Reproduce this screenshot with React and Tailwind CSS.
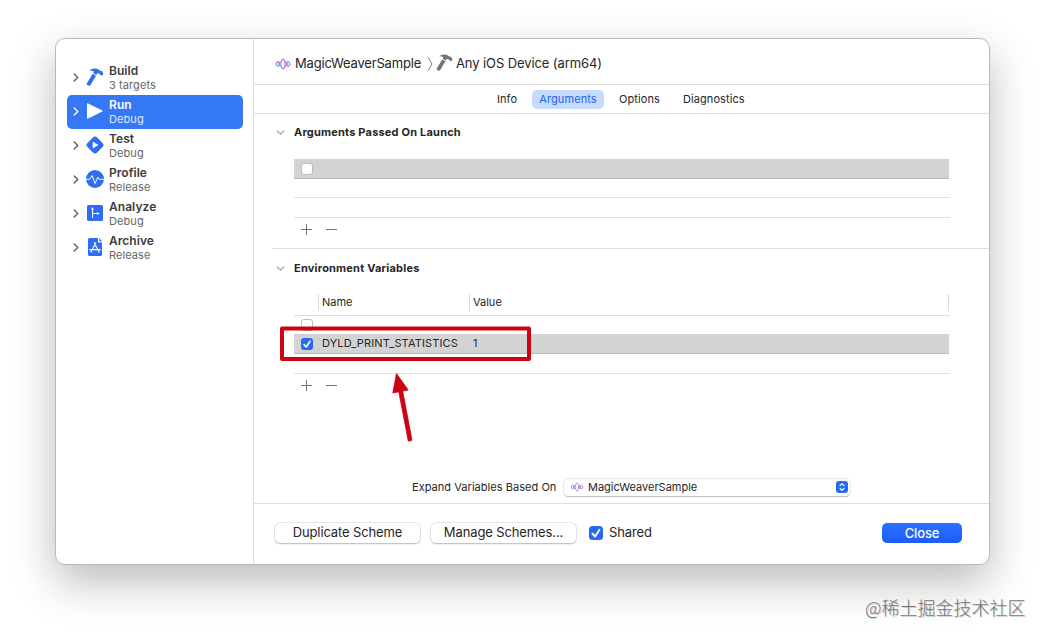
import React from "react";

const schemes = [
  { name: "Build", detail: "3 targets", icon: "build" },
  { name: "Run", detail: "Debug", icon: "run" },
  { name: "Test", detail: "Debug", icon: "test" },
  { name: "Profile", detail: "Release", icon: "profile" },
  { name: "Analyze", detail: "Debug", icon: "analyze" },
  { name: "Archive", detail: "Release", icon: "archive" },
];

function Hammer({ className }) {
  return (
    <svg viewBox="0 0 18 18" className={className} fill="currentColor">
      <path d="M3.300 2.500C5.200.6 8.300-.1 11 .8c1.500.5 2.500 1.200 3.200 2.100l1.500-.2 1.800 3.200-1.800 1.800-1.900-1.300-.5-.9-2-.2-1 1.600-3.100-1.800.7-1.500C6.700 2.500 5 2.500 3.300 2.500z" />
      <path d="M6.600 5.700 10 7.800 4.500 17c-.5.9-1.400 1-2.300.5l-.8-.5c-.8-.5-.9-1.300-.3-2.100z" />
    </svg>
  );
}

function SchemeIcon({ icon }) {
  if (icon === "build") return <Hammer className="w-[18px] h-[18px] text-[#2f6ef3]" />;
  if (icon === "run") {
    return (
      <svg viewBox="0 0 18 18" className="w-[18px] h-[18px]">
        <path d="M1.500 1.700v14.600L16.300 9z" fill="#fff" stroke="#fff" strokeWidth="1" strokeLinejoin="round" />
      </svg>
    );
  }
  if (icon === "test") {
    return (
      <svg viewBox="0 0 18 18" className="w-[18px] h-[18px]">
        <rect x="2.200" y="2.200" width="13.600" height="13.600" rx="3" transform="rotate(45 9 9)" fill="#2f6ef3" />
        <path d="M7 5.900v6.200L12 9z" fill="#fff" stroke="#fff" strokeWidth=".5" strokeLinejoin="round" />
      </svg>
    );
  }
  if (icon === "profile") {
    return (
      <svg viewBox="0 0 18 18" className="w-[18px] h-[18px]" fill="none">
        <circle cx="9" cy="9" r="9" fill="#2f6ef3" />
        <path d="M0 9.300h3.600L6.200 5.500l2.900 8 2.800-6.300 1.300 2.100H18" stroke="#fff" strokeWidth="1" strokeLinejoin="round" />
      </svg>
    );
  }
  if (icon === "analyze") {
    return (
      <svg viewBox="0 0 18 18" className="w-[18px] h-[18px]" fill="none">
        <rect x="1" y="1" width="16" height="16" rx="1.500" fill="#2f6ef3" />
        <path d="M6.500 5v9M6.500 9.500h5.500" stroke="#fff" strokeWidth="1" />
        <path d="M6.500 3.200 8.100 5.600H4.900zM13.600 9.500 11.200 7.900v3.200z" fill="#fff" />
      </svg>
    );
  }
  return (
    <svg viewBox="0 0 18 18" className="w-[18px] h-[18px]" fill="none">
      <path d="M3.500 0H12v4.500h4V16.500a1.500 1.500 0 0 1-1.500 1.500h-11A1.500 1.500 0 0 1 2 16.500v-15A1.500 1.500 0 0 1 3.500 0z" fill="#2f6ef3" />
      <path d="M13.300 0 16 3.200h-2.700z" fill="#2f6ef3" />
      <path d="M9.700 5 5 14M8.300 5l4.700 9M3.700 11.700h10.600" stroke="#fff" strokeWidth="1.200" strokeLinecap="round" />
    </svg>
  );
}

function Chevron({ className }) {
  return (
    <svg viewBox="0 0 6 10" className={className} fill="none" stroke="currentColor" strokeWidth="1.500" strokeLinecap="round" strokeLinejoin="round">
      <path d="m1 1 4 4-4 4" />
    </svg>
  );
}

function WeaverIcon({ className }) {
  return (
    <svg viewBox="0 0 16 12" className={className} fill="none" strokeWidth="1.200">
      <path d="M.7 6c.8 0 1-2.400 2.300-2.400S4.200 8.400 5.400 8.400" stroke="#c85fd0" />
      <path d="M.7 6c.8 0 1 2.400 2.300 2.400S4.200 3.600 5.400 3.600" stroke="#6ba5e8" />
      <path d="M15.300 6c-.8 0-1-2.400-2.300-2.400s-1.200 4.800-2.400 4.800" stroke="#6ba5e8" />
      <path d="M15.300 6c-.8 0-1 2.400-2.300 2.400s-1.200-4.800-2.400-4.800" stroke="#a777dc" />
      <path d="M8 1C6.500 1.800 5.800 4 5.800 6s.7 4.200 2.200 5" stroke="#6ba5e8" />
      <path d="M8 1c1.500.8 2.200 3 2.200 5S9.500 10.200 8 11" stroke="#dc64c4" />
    </svg>
  );
}

function CheckBox({ checked, size }) {
  const box = size === "lg" ? "w-[14px] h-[14px] rounded-[3.500px]" : "w-[12px] h-[12px] rounded-[3px]";
  if (!checked) {
    return <span className="block shrink-0 w-[12px] h-[12px] rounded-[3px] bg-white border border-[#bdbdbd]" />;
  }
  return (
    <span className={box + " block shrink-0 bg-[#2769f5]"}>
      <svg viewBox="0 0 12 12" className="w-full h-full" fill="none" stroke="#fff" strokeWidth="1.600" strokeLinecap="round" strokeLinejoin="round">
        <path d="m3 6.500 2.200 2.600L9 3.200" />
      </svg>
    </span>
  );
}

function AddRemove() {
  return (
    <div className="flex h-[24px] items-center gap-[14px] pb-[1px] pl-[7px]">
      <svg viewBox="0 0 11 11" className="w-[11px] h-[11px]" stroke="#747474"><path d="M0 5.500h11M5.500 0v11" /></svg>
      <svg viewBox="0 0 11 11" className="w-[11px] h-[11px]" stroke="#747474"><path d="M0 5.500h11" /></svg>
    </div>
  );
}

function SectionTitle({ children }) {
  return (
    <div className="flex h-[16px] items-center">
      <Chevron className="w-[5px] h-[9px] rotate-90 text-[#a3a3a3] ml-[24px] mr-[11px]" />
      <h2 className="text-[11px] font-bold tracking-[0.2px] text-[#262626]">{children}</h2>
    </div>
  );
}

function Sidebar() {
  return (
    <aside className="w-[198px] shrink-0 border-r border-[#dedede] pt-[22px] pl-[11px]">
      {schemes.map((s) => {
        const active = s.name === "Run";
        return (
          <div
            key={s.name}
            className={"flex items-center w-[176px] h-[34px] rounded-[5px] pb-[2px] pl-[6px] " + (active ? "bg-[#3478f6] text-white" : "text-[#3c3c3c]")}
          >
            <Chevron className={"w-[6px] h-[9px] mr-[7px] " + (active ? "text-white" : "text-[#5c5c5c]")} />
            <SchemeIcon icon={s.icon} />
            <div className="ml-[5px] pt-[2px]">
              <div className="text-[12px] leading-[14px] font-semibold tracking-[0.05px]">{s.name}</div>
              <div className={"text-[11px] leading-[14px] tracking-[0.08px] " + (active ? "text-[#dce8ff]" : "text-[#666666]")}>{s.detail}</div>
            </div>
          </div>
        );
      })}
    </aside>
  );
}

function Breadcrumb() {
  return (
    <div className="flex h-[46px] items-center border-b border-[#dedede] pt-[4px] pl-[21px] text-[13px] text-[#262626]">
      <WeaverIcon className="w-[16px] h-[12px]" />
      <span className="ml-[4px] w-[126px] tracking-[-0.18px]">MagicWeaverSample</span>
      <svg viewBox="0 0 6 16" className="ml-[6px] w-[6px] h-[16px]" fill="none" stroke="#858585"><path d="m1 1 4 7-4 7" /></svg>
      <Hammer className="ml-[3px] mb-[2px] w-[17px] h-[17px] text-[#747474]" />
      <span className="ml-[3px] tracking-[-0.1px]">Any iOS Device (arm64)</span>
    </div>
  );
}

function Tabs() {
  return (
    <nav className="flex h-[29px] items-center border-b border-[#dedede] pl-[243px] text-[11px] tracking-[0.08px] text-[#262626]">
      <span className="w-[20px]">Info</span>
      <span className="ml-[15px] flex h-[19px] w-[72px] items-center justify-center rounded-[5px] bg-[#c4dbfd] text-[#2463eb]">Arguments</span>
      <span className="ml-[15px] w-[41px]">Options</span>
      <span className="ml-[23px]">Diagnostics</span>
    </nav>
  );
}

function LaunchArguments() {
  return (
    <section className="pt-[10px]">
      <SectionTitle>Arguments Passed On Launch</SectionTitle>
      <div className="ml-[40px] mr-[39px] mt-[19px]">
        <div className="flex h-[20px] w-[655px] items-center border-b border-[#b5b5b5] bg-[#d3d3d3] pl-[7px]"><CheckBox /></div>
        <div className="h-[19px] border-b border-[#dfdfdf]" />
        <div className="h-[20px] border-b border-[#dfdfdf]" />
        <AddRemove />
      </div>
      <div className="ml-[18px] mt-[6px] border-b border-[#dfdfdf]" />
    </section>
  );
}

function EnvironmentVariables() {
  return (
    <section className="relative pt-[11px]">
      <SectionTitle>Environment Variables</SectionTitle>
      <div className="ml-[40px] mr-[39px] mt-[16px] text-[11px] text-[#262626]">
        <div className="flex h-[24px] items-start border-b border-[#dfdfdf] pt-[2px]">
          <div className="h-[17px] w-[25px] border-r border-[#d8d8d8]" />
          <div className="h-[17px] w-[151px] border-r border-[#d8d8d8] pl-[3px] leading-[17px]">Name</div>
          <div className="h-[17px] w-[479px] border-r border-[#d8d8d8] pl-[3px] leading-[17px]">Value</div>
        </div>
        <div className="h-[18px] overflow-hidden pl-[7px] pt-[3px]"><CheckBox /></div>
        <div className="flex h-[20px] w-[655px] items-center border-b border-[#b9b9b9] bg-[#d3d3d3] pl-[7px]">
          <CheckBox checked />
          <span className="ml-[9px] w-[151px] tracking-[0.13px]">DYLD_PRINT_STATISTICS</span>
          <span>1</span>
        </div>
        <div className="h-[20px] border-b border-[#dfdfdf]" />
        <AddRemove />
      </div>
      {/* callout frame and arrow over the selected row */}
      <svg viewBox="0 0 252 120" className="absolute left-[26px] top-[77px] w-[252px] h-[120px]">
        <rect x="2" y="2.500" width="247" height="30.500" fill="none" stroke="#cc0314" strokeWidth="4" strokeLinejoin="round" />
        <path d="M116.500 47.500 128.200 64 122.700 65.100 132 114.300 128.300 115.200 118.800 65.800 112.800 67z" fill="#cc0314" stroke="#cc0314" strokeWidth=".8" />
      </svg>
    </section>
  );
}

function ExpandVariables() {
  return (
    <div className="mt-auto mb-[7px] ml-[158px] flex h-[18px] items-center text-[11px] text-[#262626]">
      <span className="w-[144px] whitespace-nowrap tracking-[0.04px]">Expand Variables Based On</span>
      <div className="ml-[8px] flex h-[17px] w-[286px] items-center rounded-[4.500px] bg-white pl-[6px] pr-[2px] shadow-[0_0_0_0.500px_#d8d8d8,0_1px_1px_0_#aaaaaa]">
        <WeaverIcon className="w-[14px] h-[10px]" />
        <span className="ml-[4px] flex-1">MagicWeaverSample</span>
        <span className="flex h-[12px] w-[12px] items-center justify-center rounded-[3px] bg-[#2769f5]">
          <svg viewBox="0 0 8 10" className="w-[8px] h-[10px]" fill="none" stroke="#fff" strokeWidth="1.200" strokeLinecap="round" strokeLinejoin="round"><path d="m2 3.700 2-2 2 2M2 6.300l2 2 2-2" /></svg>
        </span>
      </div>
    </div>
  );
}

function Footer() {
  const button = "flex h-[20px] w-[145px] items-center justify-center rounded-[5px] bg-white shadow-[0_0_0_0.500px_#d0d0d0,0_1px_1.500px_0_#aaaaaa] ";
  return (
    <footer className="flex h-[61px] items-center border-t border-[#dedede] pb-[2px] pl-[21px] pr-[27px] text-[13px] tracking-[-0.12px] text-[#262626]">
      <button className={button}>Duplicate Scheme</button>
      <button className={button + "ml-[11px]"}>Manage Schemes...</button>
      <label className="ml-[13px] flex items-center gap-[6px]"><CheckBox checked size="lg" />Shared</label>
      <button className="ml-auto h-[20px] w-[80px] rounded-[5px] bg-linear-to-b from-[#2c70ff] to-[#1d5cf7] leading-[19px] font-medium text-white">Close</button>
    </footer>
  );
}

export default function App() {
  return (
    <div className="relative h-[638px] w-[1045px] overflow-hidden bg-white pl-[55px] pt-[38px] font-['Inter','Liberation_Sans',sans-serif]">
      <div className="flex h-[527px] w-[935px] overflow-hidden rounded-[10px] border border-[#b9b9b9] bg-white shadow-[0_17px_44px_0_rgba(0,0,0,0.27)]">
        <Sidebar />
        <main className="flex min-w-0 flex-1 flex-col">
          <Breadcrumb />
          <Tabs />
          <LaunchArguments />
          <EnvironmentVariables />
          <ExpandVariables />
          <Footer />
        </main>
      </div>
      <div className="absolute left-[865px] top-[594px] whitespace-nowrap text-[18px] leading-[26px] font-light text-[#777777] font-['Noto_Sans_CJK_SC',sans-serif] [text-shadow:1px_1px_0_#cfcfcf]">
        @稀土掘金技术社区
      </div>
    </div>
  );
}
